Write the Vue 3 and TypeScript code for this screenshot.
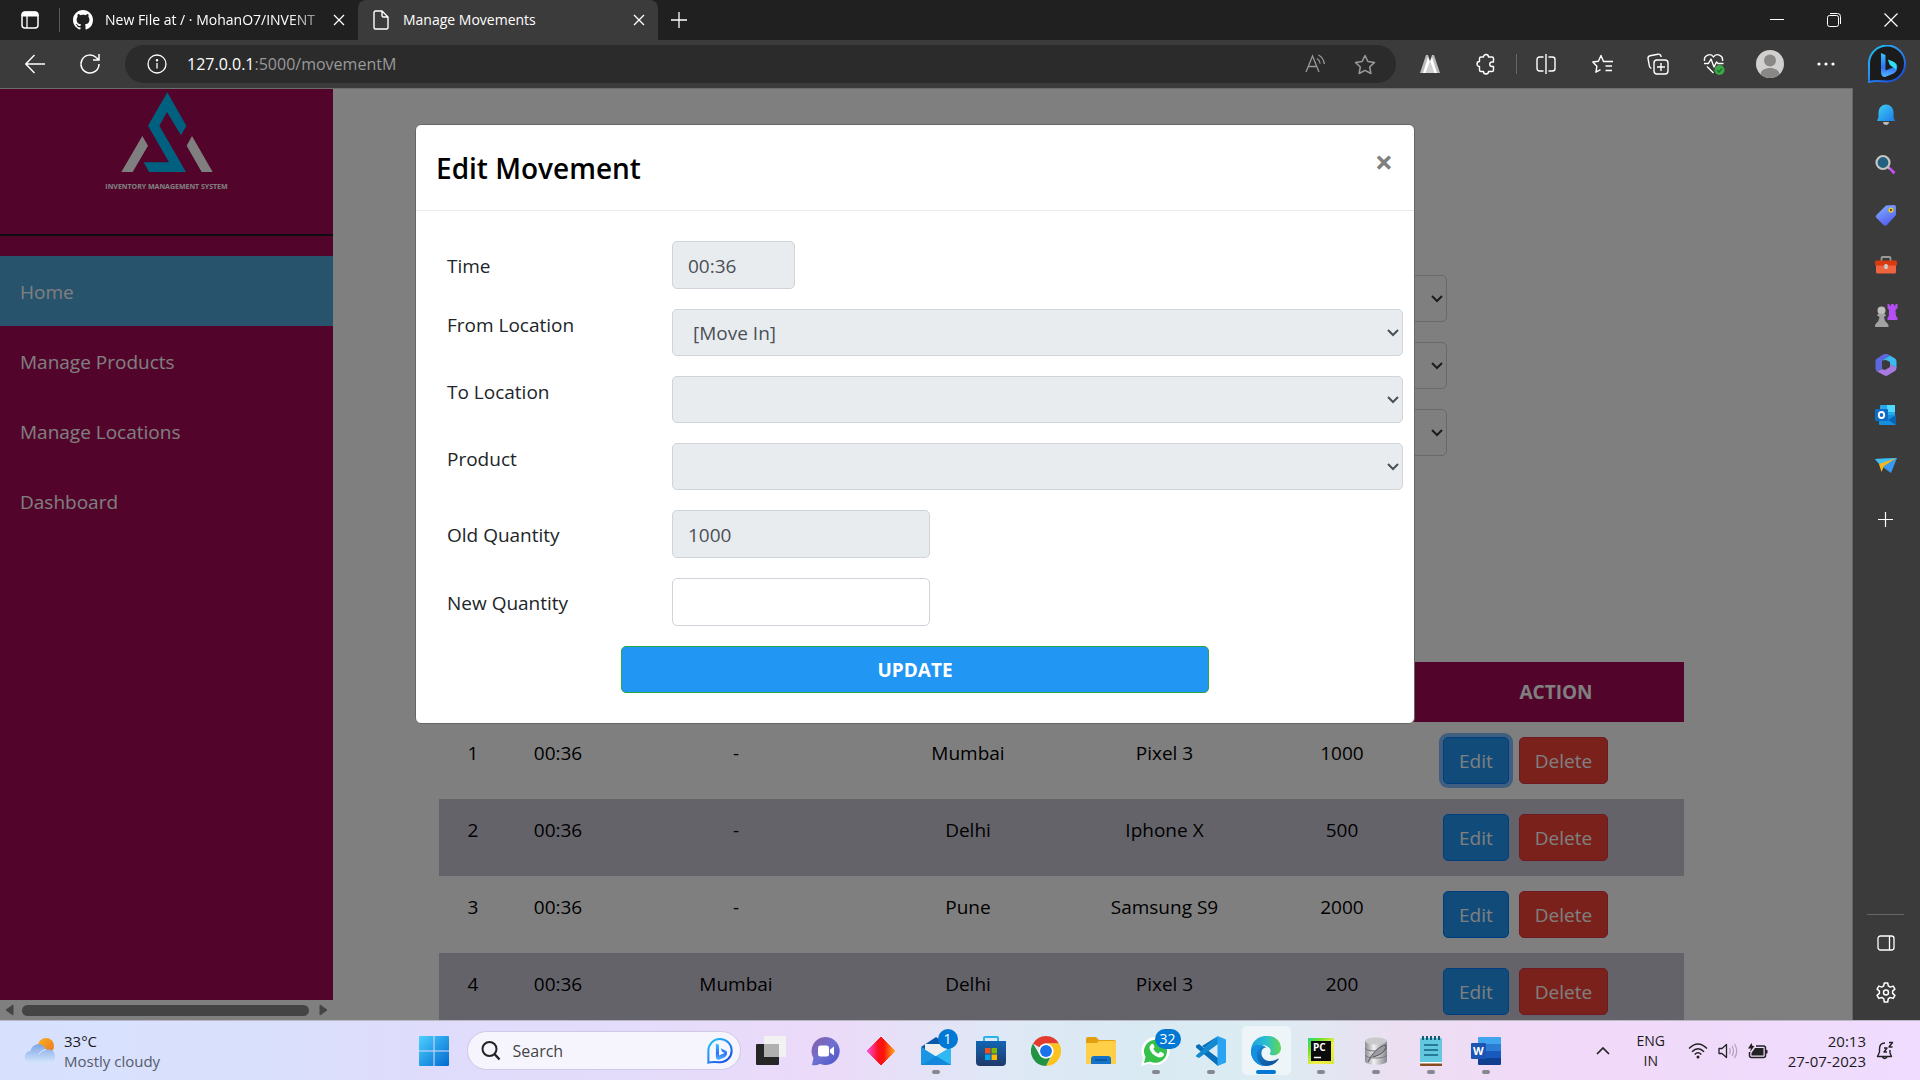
<script setup lang="ts">
import { ref } from 'vue'

interface Movement {
  id: number
  time: string
  from: string
  to: string
  product: string
  quantity: number
}

const navItems: string[] = ['Home', 'Manage Products', 'Manage Locations', 'Dashboard']

const columns: { label: string; width: number }[] = [
  { label: 'Number', width: 68 },
  { label: 'Time', width: 102 },
  { label: 'From', width: 254 },
  { label: 'To', width: 210 },
  { label: 'Product', width: 183 },
  { label: 'Quantity', width: 172 },
]

const movements: Movement[] = [
  { id: 1, time: '00:36', from: '-', to: 'Mumbai', product: 'Pixel 3', quantity: 1000 },
  { id: 2, time: '00:36', from: '-', to: 'Delhi', product: 'Iphone X', quantity: 500 },
  { id: 3, time: '00:36', from: '-', to: 'Pune', product: 'Samsung S9', quantity: 2000 },
  { id: 4, time: '00:36', from: 'Mumbai', to: 'Delhi', product: 'Pixel 3', quantity: 200 },
]

const editing = ref<number>(1)
const time = ref('00:36')
const oldQuantity = ref('1000')
const newQuantity = ref('')
</script>

<template>
  <div class="desktop">
    <header class="titlebar">
      <button class="tab-menu" aria-label="Tab actions">
        <svg width="18" height="18" viewBox="0 0 18 18" fill="none" stroke="#fff"><rect x="1" y="1" width="16" height="16" rx="3" stroke-width="1.5" /><path d="M1 4a3 3 0 0 1 3-3h10a3 3 0 0 1 3 3v1H1z" fill="#fff" /><path d="M6 5v12" stroke-width="1.3" /></svg>
      </button>
      <div class="tab">
        <svg width="20" height="20" viewBox="0 0 16 16" fill="#fff"><path d="M8 0C3.58 0 0 3.58 0 8c0 3.54 2.29 6.53 5.47 7.59.4.07.55-.17.55-.38 0-.19-.01-.82-.01-1.49-2.01.37-2.53-.49-2.69-.94-.09-.23-.48-.94-.82-1.13-.28-.15-.68-.52-.01-.53.63-.01 1.08.58 1.23.82.72 1.21 1.87.87 2.33.66.07-.52.28-.87.51-1.07-1.78-.2-3.64-.89-3.64-3.95 0-.87.31-1.59.82-2.15-.08-.2-.36-1.02.08-2.12 0 0 .67-.21 2.2.82.64-.18 1.32-.27 2-.27s1.36.09 2 .27c1.53-1.04 2.2-.82 2.2-.82.44 1.1.16 1.92.08 2.12.51.56.82 1.27.82 2.15 0 3.07-1.87 3.75-3.65 3.95.29.25.54.73.54 1.48 0 1.07-.01 1.93-.01 2.2 0 .21.15.46.55.38A8.01 8.01 0 0 0 16 8c0-4.42-3.58-8-8-8" /></svg>
        <span class="tab-title fade">New File at / · MohanO7/INVENT</span>
        <button class="tab-close" aria-label="Close tab"><svg width="12" height="12" viewBox="0 0 12 12" stroke="#fff" stroke-width="1.3"><path d="M1 1l10 10M11 1L1 11" /></svg></button>
      </div>
      <div class="tab active">
        <svg width="20" height="20" viewBox="0 0 20 20" fill="none" stroke="#fff" stroke-width="1.4" stroke-linejoin="round"><path d="M3 2.5a1.5 1.5 0 0 1 1.500-1.500H11l6 6v10.500a1.500 1.500 0 0 1-1.500 1.500h-11A1.500 1.500 0 0 1 3 17.500zM11 1v4.500a1.500 1.500 0 0 0 1.500 1.500H17" /></svg>
        <span class="tab-title">Manage Movements</span>
        <button class="tab-close" aria-label="Close tab"><svg width="12" height="12" viewBox="0 0 12 12" stroke="#fff" stroke-width="1.3"><path d="M1 1l10 10M11 1L1 11" /></svg></button>
      </div>
      <button class="new-tab" aria-label="New tab"><svg width="18" height="18" viewBox="0 0 18 18" stroke="#fff" stroke-width="1.3"><path d="M9 1v16M1 9h16" /></svg></button>
      <div class="window-controls">
        <button aria-label="Minimize"><svg width="14" height="14" viewBox="0 0 14 14" stroke="#fff"><path d="M0 6.500h14" /></svg></button>
        <button aria-label="Restore"><svg width="14" height="14" viewBox="0 0 14 14" fill="none" stroke="#fff"><rect x=".5" y="2.500" width="11" height="11" rx="2" /><path d="M3 .5h7.500a3 3 0 0 1 3 3V11" /></svg></button>
        <button aria-label="Close"><svg width="14" height="14" viewBox="0 0 14 14" stroke="#fff" stroke-width="1.2"><path d="M.5.5l13 13M13.500.5l-13 13" /></svg></button>
      </div>
    </header>

    <div class="toolbar">
      <button class="nav-btn" aria-label="Back"><svg width="20" height="20" viewBox="0 0 20 20" fill="none" stroke="#fff" stroke-width="1.4"><path d="M20 10H1M9.500 1L.8 10l8.700 9" /></svg></button>
      <button class="nav-btn" aria-label="Refresh"><svg width="22" height="22" viewBox="0 0 22 22" fill="none" stroke="#fff" stroke-width="1.5"><path d="M20 11a9 9 0 1 1-2.800-6.500L20 7M20 1v6h-6" /></svg></button>
      <div class="address">
        <svg width="20" height="20" viewBox="0 0 20 20" fill="none" stroke="#fff" stroke-width="1.300"><circle cx="10" cy="10" r="9" /><path d="M10 9v5.500" /><circle cx="10" cy="6.200" r=".6" fill="#fff" /></svg>
        <span class="url"><b>127.0.0.1</b>:5000/movementM</span>
        <button class="addr-btn" aria-label="Read aloud"><svg width="21" height="20" viewBox="0 0 21 20" fill="none" stroke="#999" stroke-width="1.300"><path d="M1 18L7.500 2 14 18M3.300 12.500h8.400M12 4.500c2 1.200 3 3 3.200 5M13.500 1c3.500 2 5.500 5.200 5.800 9" /></svg></button>
        <button class="addr-btn" aria-label="Favorite"><svg width="22" height="21" viewBox="0 0 22 21" fill="none" stroke="#999" stroke-width="1.500" stroke-linejoin="round"><path d="M11 1.500l2.900 6 6.600.9-4.800 4.600 1.200 6.500L11 16.400l-5.900 3.100 1.200-6.500L1.500 8.400l6.600-.9z" /></svg></button>
      </div>
      <div class="tools">
        <button aria-label="Extension"><svg width="20" height="18" viewBox="0 0 20 18"><path d="M0 18L6 0h2l2 6 2-6h2l6 18z" fill="#bbb" /><path d="M3 18L8 2l2 5 2-5 5 16z" fill="#fff" /><path d="M5.500 18L10 6l4.500 12z" fill="#d0d0d0" /></svg></button>
        <button aria-label="Extensions"><svg width="20" height="22" viewBox="0 0 20 22" fill="none" stroke="#fff" stroke-width="1.400" stroke-linejoin="round"><path d="M7.500 4a2.500 2.500 0 0 1 5 0H16a1.500 1.500 0 0 1 1.500 1.500V9H16a2 2 0 0 0 0 4.500h1.500V17A1.500 1.500 0 0 1 16 18.500h-3.500a2.500 2.500 0 0 1-5 0H5A1.500 1.500 0 0 1 3.500 17v-3.500a2.500 2.500 0 0 1 0-5v-3A1.500 1.500 0 0 1 5 4z" /></svg></button>
        <span class="tool-line"></span>
        <button aria-label="Split screen"><svg width="20" height="20" viewBox="0 0 20 20" fill="none" stroke="#fff" stroke-width="1.400"><path d="M7.500 3H3.500a2.500 2.500 0 0 0-2.500 2.500v9A2.500 2.500 0 0 0 3.500 17h4M12.500 3h4A2.500 2.500 0 0 1 19 5.500v9a2.500 2.500 0 0 1-2.500 2.500h-4M10 0v20" /></svg></button>
        <button aria-label="Favorites"><svg width="21" height="20" viewBox="0 0 21 20" fill="none" stroke="#fff" stroke-width="1.400" stroke-linejoin="round"><path d="M12 7.500h-.5L9 1.500l-2.600 5.700-5.600.8 4.100 4.200-1 6 4.600-2.600M11.500 7.500H21M13.500 12H20M13.500 16.500H20" /></svg></button>
        <button aria-label="Collections"><svg width="22" height="22" viewBox="0 0 22 22" fill="none" stroke="#fff" stroke-width="1.400" stroke-linejoin="round"><rect x="7" y="7" width="14" height="14" rx="3" /><path d="M14 10v8M10 14h8M4.500 15.500l-.8-.5a3 3 0 0 1-1.300-2L1 5.500A2.500 2.500 0 0 1 3 2.800l8-1.600a2.500 2.500 0 0 1 3 2V4" /></svg></button>
        <button aria-label="Browser essentials"><svg width="22" height="22" viewBox="0 0 22 22" fill="none" stroke="#fff" stroke-width="1.400" stroke-linejoin="round"><path d="M1.500 8c-1-6 6.500-8.500 9-4 2.500-4.500 10-2 9 4M1 10.500h4.500L8 6l3 8 2.500-5 1.500 1.500h5.500M4 13.500l6.500 6.500" /><circle cx="16.500" cy="17" r="5" fill="#3fa648" stroke="none" /><path d="M14 17l2 2 3-3.500" stroke="#173" /></svg></button>
        <button aria-label="Profile"><svg width="28" height="28" viewBox="0 0 28 28"><circle cx="14" cy="14" r="14" fill="#d2d0ce" /><circle cx="14" cy="10.500" r="6" fill="#8a8886" /><path d="M4.500 24.300C5 15.800 23 15.800 23.500 24.300a14 14 0 0 1-19 0z" fill="#8a8886" /></svg></button>
        <button aria-label="Settings and more"><svg width="18" height="4" viewBox="0 0 18 4" fill="#fff"><circle cx="2" cy="2" r="1.600" /><circle cx="9" cy="2" r="1.600" /><circle cx="16" cy="2" r="1.600" /></svg></button>
      </div>
      <button class="copilot" aria-label="Bing">
        <svg width="38" height="38" viewBox="0 0 38 38">
          <defs>
            <linearGradient id="bingRing" x1="0" y1="0" x2=".8" y2="1"><stop stop-color="#18c9f5" /><stop offset=".5" stop-color="#2b8cf0" /><stop offset="1" stop-color="#174ae4" /></linearGradient>
            <linearGradient id="bingB" x1="0" y1="0" x2="0" y2="1"><stop stop-color="#35c6ff" /><stop offset=".6" stop-color="#2f6ff5" /><stop offset="1" stop-color="#55b8ff" /></linearGradient>
          </defs>
          <path d="M1 37V19A18 18 0 1 1 19 36.500C12 36 6 35.500 1 37z" fill="#1b1b1b" stroke="url(#bingRing)" stroke-width="2" />
          <path d="M13 8l4.500 2v15.500L26 22l-4-2-2-5 8.500 4c2 4 0 8-3 9.500L17 32c-2.500 0-4-2-4-4.500z" fill="url(#bingB)" />
          <path d="M20 14.500l5 2c4 2 4 5 3 8l-6-4.500z" fill="#31e0f0" />
        </svg>
      </button>
    </div>

    <div class="workspace">
      <div class="page">
        <aside class="app-side">
          <div class="brand">
            <svg width="92" height="80" viewBox="361 35 276 240" aria-hidden="true">
              <path d="M500 36L557 136 541 165 499 95 476 136 556 275H445L429 246H505L442 136z" fill="#00c0ff" />
              <path d="M425 167L442 196 396 275H362zM574 167L636 275H603L558 196z" fill="#fff" />
            </svg>
            <span>INVENTORY MANAGEMENT SYSTEM</span>
          </div>
          <nav>
            <a v-for="(item, i) in navItems" :key="item" href="#" :class="{ current: i === 0 }">{{ item }}</a>
          </nav>
          <div class="hscroll" aria-hidden="true">
            <svg width="9" height="12" viewBox="0 0 9 12"><path d="M8 1v10L1 6z" fill="#888" stroke="#888" stroke-linejoin="round" /></svg>
            <i></i>
            <svg width="9" height="12" viewBox="0 0 9 12"><path d="M1 1v10l7-5z" fill="#888" stroke="#888" stroke-linejoin="round" /></svg>
          </div>
        </aside>

        <main>
          <form class="add-form">
            <div v-for="name in ['From Location', 'To Location', 'Product']" :key="name" class="select">
              <select :aria-label="name"><option></option></select>
              <svg width="12" height="8" viewBox="0 0 12 8" fill="none" stroke="#343a40" stroke-width="2"><path d="M1 1l5 5 5-5" /></svg>
            </div>
          </form>
          <table>
            <colgroup>
              <col v-for="c in columns" :key="c.label" :style="{ width: (c.width / 1245) * 100 + '%' }" />
              <col />
            </colgroup>
            <thead>
              <tr>
                <th v-for="c in columns" :key="c.label" scope="col" :aria-label="c.label"></th>
                <th scope="col">ACTION</th>
              </tr>
            </thead>
            <tbody>
              <tr v-for="m in movements" :key="m.id">
                <td>{{ m.id }}</td>
                <td>{{ m.time }}</td>
                <td>{{ m.from }}</td>
                <td>{{ m.to }}</td>
                <td>{{ m.product }}</td>
                <td>{{ m.quantity }}</td>
                <td class="actions">
                  <div>
                    <button class="edit" :class="{ focused: m.id === editing }">Edit</button>
                    <button class="delete">Delete</button>
                  </div>
                </td>
              </tr>
            </tbody>
          </table>
        </main>

        <div class="backdrop">
          <section class="modal" role="dialog" aria-labelledby="modal-title">
            <header class="modal-head">
              <h2 id="modal-title">Edit Movement</h2>
              <button aria-label="Close">×</button>
            </header>
            <form class="modal-form" @submit.prevent>
              <div class="row">
                <label for="time">Time</label>
                <input id="time" v-model="time" class="short" type="text" readonly />
              </div>
              <div class="row picker">
                <label for="from">From Location</label>
                <div class="select">
                  <select id="from" disabled><option>[Move In]</option></select>
                  <svg width="12" height="8" viewBox="0 0 12 8" fill="none" stroke="#495057" stroke-width="2"><path d="M1 1l5 5 5-5" /></svg>
                </div>
              </div>
              <div class="row picker">
                <label for="to">To Location</label>
                <div class="select">
                  <select id="to" disabled><option></option></select>
                  <svg width="12" height="8" viewBox="0 0 12 8" fill="none" stroke="#495057" stroke-width="2"><path d="M1 1l5 5 5-5" /></svg>
                </div>
              </div>
              <div class="row picker">
                <label for="product">Product</label>
                <div class="select">
                  <select id="product" disabled><option></option></select>
                  <svg width="12" height="8" viewBox="0 0 12 8" fill="none" stroke="#495057" stroke-width="2"><path d="M1 1l5 5 5-5" /></svg>
                </div>
              </div>
              <div class="row">
                <label for="old">Old Quantity</label>
                <input id="old" v-model="oldQuantity" type="text" readonly />
              </div>
              <div class="row">
                <label for="new">New Quantity</label>
                <input id="new" v-model="newQuantity" type="text" />
              </div>
              <button class="update" type="submit">UPDATE</button>
            </form>
          </section>
        </div>
      </div>

      <aside class="edge-side">
        <button aria-label="Notifications"><svg width="20" height="22" viewBox="0 0 20 22"><defs><linearGradient id="bell" x1="0" y1="0" x2="1" y2="1"><stop stop-color="#3fd0f5" /><stop offset="1" stop-color="#1b7be8" /></linearGradient></defs><path d="M7 18h6c0 4-6 4-6 0z" fill="#bbb" /><path d="M2.500 8a7.500 7.500 0 0 1 15 0v5l1.500 4H1l1.500-4z" fill="url(#bell)" /></svg></button>
        <button aria-label="Search"><svg width="22" height="22" viewBox="0 0 22 22"><path d="M12 13l2-1 6.500 6-2 2.500z" fill="#c64df5" /><path d="M11.500 12l3 3" stroke="#aaa" stroke-width="2" /><circle cx="8" cy="8.500" r="6.500" fill="#21607f" stroke="#c8c5c0" stroke-width="2.200" /></svg></button>
        <button aria-label="Shopping"><svg width="22" height="22" viewBox="0 0 22 22"><defs><linearGradient id="tag" x1="0" y1="0" x2=".5" y2="1"><stop stop-color="#84b4ff" /><stop offset="1" stop-color="#5560f0" /></linearGradient></defs><path d="M11 1.500L19 1q2 0 2 2v8l-9 10q-2 1.500-3.500 0L1.500 14q-1.500-1.500 0-3z" fill="url(#tag)" /><circle cx="16" cy="6" r="1.800" fill="#333" stroke="#f7c81c" stroke-width="1.500" /></svg></button>
        <button aria-label="Tools"><svg width="24" height="18" viewBox="0 0 24 18"><path d="M7.500 5V2q0-1 1-1h7q1 0 1 1v3" fill="none" stroke="#999" stroke-width="1.800" /><path d="M2 8h20v8q0 1.500-1.500 1.500h-17Q2 17.500 2 16z" fill="#f0633f" /><rect x="1" y="4.500" width="22" height="5" rx="1" fill="#d83b10" /><rect x="10.200" y="8" width="3.600" height="5" rx="1.500" fill="#ccc" /></svg></button>
        <button aria-label="Games"><svg width="24" height="24" viewBox="0 0 24 24"><path d="M13.500 1h2v1.500h1.700V1h2.600v1.500h1.700V1h2v4L21.500 7 22 13l1.500 2v2h-10v-2l1.300-2 .2-6-1.500-2z" fill="#b44ef5" /><circle cx="7.500" cy="7.500" r="4" fill="#bdbdbd" /><path d="M3 12.500q0-2 4.500-2t4.500 2l-2 1.500q.5 4 3 6 2 1.500 1.500 4H1q-.5-2.500 1.500-4 2.500-2 3-6z" fill="#a2a2a2" /></svg></button>
        <button aria-label="Microsoft 365"><svg width="22" height="22" viewBox="0 0 22 22"><path d="M9 0L2 4.500q-1.500 1-1.500 3v7q0 2 1.500 3l5-2.500V6.500L15 1.500 12.500 0q-1.700-.8-3.500 0z" fill="#5d68dc" /><path d="M7 6.500L15 1.500l5 3q1.500 1 1.500 3V14L15 10.500V8l-4-2z" fill="#3db9ee" /><path d="M21.500 13.500q0 2.500-1.500 3.500l-7.500 4.500q-1.500.8-3 0L2 17.500l5-2.500 3 1 5-3v-2.500z" fill="#a77ae0" /></svg></button>
        <button aria-label="Outlook"><svg width="22" height="20" viewBox="0 0 22 20"><rect x="5" width="15" height="12" rx="1" fill="#28a8ea" /><rect x="12" width="8" height="7" fill="#50d9ff" /><path d="M4 10h16l1 9q0 1-1 1H5q-1 0-1-1z" fill="#1490df" /><path d="M21 10v10l-8-5z" fill="#0a64b4" /><rect y="4" width="13" height="12" rx="1" fill="#0f6cc4" /><ellipse cx="6.500" cy="10" rx="2.700" ry="3" fill="none" stroke="#fff" stroke-width="1.800" /></svg></button>
        <button aria-label="Drop"><svg width="22" height="17" viewBox="0 0 22 17"><path d="M0 2L22 1 16 16 9 11z" fill="#3a9af0" /><path d="M0 2L22 1 5 8z" fill="#40c0f0" /><path d="M4 7L21.500 1 9 9 6.500 15z" fill="#f8b61c" /></svg></button>
        <button class="plus" aria-label="Add"><svg width="15" height="15" viewBox="0 0 15 15" stroke="#fff" stroke-width="1.200"><path d="M7.500 0v15M0 7.500h15" /></svg></button>
        <div class="edge-bottom">
          <button aria-label="Hide sidebar"><svg width="18" height="16" viewBox="0 0 18 16" fill="none" stroke="#fff" stroke-width="1.300"><rect x="1" y="1" width="16" height="14" rx="2.500" /><path d="M12.500 1v14" /></svg></button>
          <button aria-label="Settings"><svg width="22" height="22" viewBox="0 0 22 22" fill="none" stroke="#fff" stroke-width="1.500" stroke-linejoin="round"><path d="M9.300 1h3.400l.6 2.900 2 1.200 2.900-1 1.700 3-2.300 2v2.300l2.300 2-1.700 3-2.900-.9-2 1.100-.6 3.400H9.300l-.6-3.400-2-1.100-2.900.9-1.700-3 2.300-2V9.100l-2.300-2 1.700-3 2.900 1 2-1.200z" /><circle cx="11" cy="10.500" r="2.500" /></svg></button>
        </div>
      </aside>
    </div>

    <footer class="taskbar">
      <div class="weather">
        <svg width="32" height="28" viewBox="0 0 32 28">
          <defs><linearGradient id="cloud" x1="0" y1="0" x2="0" y2="1"><stop stop-color="#7fa4e8" /><stop offset="1" stop-color="#d4e6fb" /></linearGradient><linearGradient id="sun" x1="0" y1="0" x2="1" y2="1"><stop stop-color="#f5b324" /><stop offset="1" stop-color="#f0711c" /></linearGradient></defs>
          <circle cx="22" cy="9" r="8" fill="url(#sun)" />
          <path d="M7 26a6 6 0 0 1-.5-12C8 6 19 4.500 22 12.500c5-1 9 2 9 7q0 6.500-6 6.500z" fill="url(#cloud)" />
          <path d="M15 17q3-4.500 7-4.500" fill="none" stroke="#e3eefc" stroke-width="1" />
        </svg>
        <p>33°C<br /><span>Mostly cloudy</span></p>
      </div>

      <div class="dock">
        <button class="item" aria-label="Start"><svg width="30" height="30" viewBox="0 0 30 30"><defs><linearGradient id="win" x1="0" y1="0" x2="1" y2="1"><stop stop-color="#4cd0ff" /><stop offset="1" stop-color="#0069d0" /></linearGradient></defs><path d="M1 0h13.500v14.500H0V1q0-1 1-1zM15.500 0H29q1 0 1 1v13.500H15.500zM0 15.500h14.500V30H1q-1 0-1-1zM15.500 15.500H30V29q0 1-1 1H15.500z" fill="url(#win)" /></svg></button>
        <div class="search">
          <svg width="20" height="20" viewBox="0 0 20 20" fill="none" stroke="#222" stroke-width="2"><circle cx="8.500" cy="8" r="7" /><path d="M13.500 13l5 5.500" stroke-width="2.400" /></svg>
          <input type="text" placeholder="Search" aria-label="Search" />
          <svg width="26" height="26" viewBox="0 0 38 38"><path d="M2 36V19A17 17 0 1 1 19 35.500C12 35 6 34.500 2 36z" fill="#f6f8ff" stroke="url(#bingRing)" stroke-width="3" /><path d="M13 8l4.500 2v15.500L26 22l-4-2-2-5 8.500 4c2 4 0 8-3 9.500L17 32c-2.500 0-4-2-4-4.500z" fill="url(#bingB)" /></svg>
        </div>
        <button class="item" aria-label="Task view"><svg width="30" height="32" viewBox="0 0 30 32"><path d="M0 10q0-1 1-1h22v20q0 1-1 1H1q-1 0-1-1z" fill="#262626" /><path d="M8 2q0-1 1-1h20q1 0 1 1v19q0 1-1 1H9q-1 0-1-1z" fill="#f2f2f2" /><path d="M8 9h15v13H9q-1 0-1-1z" fill="#b0b0b0" /></svg></button>
        <button class="item" aria-label="Chat"><svg width="30" height="30" viewBox="0 0 30 30"><defs><linearGradient id="chat" x1="0" y1="0" x2="1" y2="1"><stop stop-color="#8a5fa8" /><stop offset=".5" stop-color="#6d6fd0" /><stop offset="1" stop-color="#4a52c8" /></linearGradient></defs><path d="M15 1a14 14 0 1 1-6 26.800Q5 30 1 29l1.500-7A14 14 0 0 1 15 1z" fill="url(#chat)" /><rect x="7" y="9.500" width="11" height="11" rx="2.500" fill="#fff" /><path d="M19 13.500l4-3v9l-4-3z" fill="#fff" /></svg></button>
        <button class="item" aria-label="AnyDesk"><svg width="30" height="30" viewBox="0 0 30 30"><defs><linearGradient id="dia"><stop stop-color="#ff4fe0" /><stop offset=".4" stop-color="#fa1020" /><stop offset=".6" stop-color="#fa1508" /><stop offset="1" stop-color="#ffae20" /></linearGradient></defs><path d="M15 1l14 14-14 14L1 15z" fill="url(#dia)" stroke="url(#dia)" stroke-linejoin="round" /></svg></button>
        <button class="item open" aria-label="Mail"><svg width="30" height="28" viewBox="0 0 30 28"><path d="M15 0l15 10-15 10L0 10z" fill="#0a5aa8" /><path d="M4 7h22v8l-11 7L4 14z" fill="#eee" /><path d="M0 10l15 9.500L30 10v18H0z" fill="#1a96e4" /><path d="M0 28L30 10v18z" fill="#2fb8f2" /><path d="M15 19l15 9H0z" fill="#1287dc" /></svg><em>1</em></button>
        <button class="item" aria-label="Store"><svg width="30" height="30" viewBox="0 0 30 30"><defs><linearGradient id="store" x1="0" y1="0" x2="0" y2="1"><stop stop-color="#1266b4" /><stop offset="1" stop-color="#1f3868" /></linearGradient></defs><path d="M8 6V2q0-1 1-1h12q1 0 1 1v4" fill="none" stroke="#28b4e8" stroke-width="2" /><path d="M0 5h30v21q0 4-4 4H4q-4 0-4-4z" fill="url(#store)" /><path d="M9 12h5.500v5.500H9z" fill="#f25022" /><path d="M15.500 12H21v5.500h-5.500z" fill="#7fba00" /><path d="M9 18.500h5.500V24H9z" fill="#00a4ef" /><path d="M15.500 18.500H21V24h-5.500z" fill="#ffb900" /></svg></button>
        <button class="item" aria-label="Chrome"><svg width="30" height="30" viewBox="0 0 48 48"><path d="M24 0a24 24 0 0 1 20.800 12H24a12 12 0 0 0-10.400 6L3.200 12A24 24 0 0 1 24 0z" fill="#e33b2e" /><path d="M44.800 12A24 24 0 0 1 24 48l10.400-18A12 12 0 0 0 34 17.400L24 12z" fill="#fcc31e" /><path d="M3.200 12l10.400 18A12 12 0 0 0 24 36l7-2-7 14A24 24 0 0 1 3.200 12z" fill="#229342" /><circle cx="24" cy="24" r="12" fill="#fff" /><circle cx="24" cy="24" r="9.500" fill="#1a73e8" /></svg></button>
        <button class="item" aria-label="File Explorer"><svg width="30" height="28" viewBox="0 0 30 28"><path d="M0 2q0-2 2-2h8l3 3h15q2 0 2 2v6H0z" fill="#e0a010" /><path d="M0 6h11l2-2h15q2 0 2 2v20q0 1-1 1H1q-1 0-1-1z" fill="#ffcf48" /><path d="M5 27v-5q0-3 3-3h14q3 0 3 3v5z" fill="#1273c8" /><path d="M9 23h12" stroke="#0a4f98" stroke-width="1.500" /></svg></button>
        <button class="item open" aria-label="WhatsApp"><svg width="30" height="30" viewBox="0 0 30 30"><path d="M0 30l2.300-8A14 14 0 1 1 8 27.500z" fill="#fff" /><path d="M3 27l1.500-6A11.500 11.500 0 1 1 9 25.400z" fill="#35c24a" /><path d="M10 8.500q1.500-1.500 2.500 0l1 2.500q0 1-1.200 2 1.700 3.200 5 4.700l1.500-1.600q.8-.5 1.500 0l2.200 1.200q1 .7 0 2.400-1.700 2.300-5 1.600-7.500-2.500-9-9-.2-2.300 1.500-3.800z" fill="#fff" /></svg><em class="wide">32</em></button>
        <button class="item open" aria-label="Visual Studio Code"><svg width="30" height="30" viewBox="0 0 30 30"><path d="M22 0L8.500 12.500 3 8 0 9.500v2L22 30V22L6 10z" fill="#0a6fba" /><path d="M0 19.500L22 0v8L3 22 0 20.500z" fill="#1389d2" /><path d="M21.500 0L30 3.500v23L21.500 30z" fill="#2aa4f2" /></svg></button>
        <button class="item open here" aria-label="Microsoft Edge"><svg width="30" height="30" viewBox="0 0 30 30"><defs><linearGradient id="edgeTop"><stop stop-color="#1f9fe0" /><stop offset=".5" stop-color="#2bbfd0" /><stop offset="1" stop-color="#62d850" /></linearGradient><linearGradient id="edgeLow" x1="0" y1="0" x2="1" y2="1"><stop stop-color="#1a90dc" /><stop offset="1" stop-color="#0c4a94" /></linearGradient></defs><path d="M0 14C1-4 29-5 30 12c0 7-8 9-11.500 6 3-4 0-8-6.500-9C6 8.500 1.500 11 0 14z" fill="url(#edgeTop)" /><path d="M0 14c2-5 10-7 15-2.500C8 12 9 24 18 25c4 .5 7-1 9-2.500.8 0 .8.500.5 1C24 28 20 30 15 30 6 30-.5 23 0 14z" fill="url(#edgeLow)" /><path d="M15 11.500C9 9 5 15 6 21c1 5 5 8.500 9 9C6 30-.5 23 0 14c2-5 10-7 15-2.500z" fill="#1490e0" /></svg></button>
        <button class="item open" aria-label="PyCharm"><svg width="26" height="26" viewBox="0 0 26 26"><defs><linearGradient id="pc" x1="0" y1="0" x2="1" y2="1"><stop stop-color="#21d789" /><stop offset=".25" stop-color="#6fe02a" /><stop offset=".6" stop-color="#f5f04a" /><stop offset="1" stop-color="#d8e83a" /></linearGradient></defs><rect width="26" height="26" fill="url(#pc)" /><rect x="3" y="3" width="20" height="20" fill="#0b0b0b" /><text x="5" y="13" font-size="10" font-weight="700" fill="#fff">PC</text><path d="M6 19.500h7" stroke="#fff" stroke-width="1.500" /></svg></button>
        <button class="item open" aria-label="Database"><svg width="22" height="28" viewBox="0 0 22 28"><defs><linearGradient id="db"><stop stop-color="#8b8b90" /><stop offset=".4" stop-color="#f0f0f2" /><stop offset="1" stop-color="#85858c" /></linearGradient></defs><path d="M0 4v20c0 5 22 5 22 0V4z" fill="url(#db)" /><ellipse cx="11" cy="4" rx="11" ry="3.500" fill="#c9c9ce" /><path d="M0 11c1 4 21 4 22 0M0 18c1 4 21 4 22 0" fill="none" stroke="#77777e" /><path d="M3 25C7 16 14 9 21 8c0 6-5 10-13 12" fill="#9a9aa0" stroke="#55555c" /></svg></button>
        <button class="item open" aria-label="Notepad"><svg width="22" height="30" viewBox="0 0 22 30"><rect y="2" width="22" height="26" rx="1" fill="#62c8e0" /><path d="M0 27h22v3H1q-1 0-1-1z" fill="#8a4a20" /><path d="M0 26h22v1.500H0z" fill="#fff" /><path d="M4 9h14M4 14h14M4 19h14" stroke="#14607c" stroke-width="1.700" /><path d="M3 0v4M7 0v4M11 0v4M15 0v4M19 0v4" stroke="#185a70" stroke-width="2" /></svg></button>
        <button class="item open" aria-label="Word"><svg width="30" height="28" viewBox="0 0 30 28"><path d="M8 0h21q1 0 1 1v6H7V1q0-1 1-1z" fill="#41a5ee" /><path d="M7 7h23v7H7z" fill="#2b7cd3" /><path d="M7 14h23v7H7z" fill="#185abd" /><path d="M7 21h23v6q0 1-1 1H8q-1 0-1-1z" fill="#103f91" /><rect y="6" width="15" height="16" rx="1" fill="#1c54b4" /><text x="2" y="18" font-size="11" font-weight="700" fill="#fff">W</text></svg></button>
      </div>

      <div class="tray">
        <button class="chev" aria-label="Show hidden icons"><svg width="14" height="8" viewBox="0 0 14 8" fill="none" stroke="#222" stroke-width="1.700"><path d="M1 7l6-6 6 6" /></svg></button>
        <p class="lang">ENG<br />IN</p>
        <div class="status">
          <svg width="20" height="16" viewBox="0 0 20 16" fill="none" stroke="#222" stroke-width="1.500"><path d="M1 5.500q9-9 18 0M4 8.700q6-6 12 0M6.700 11.500q3.300-3.300 6.600 0" /><circle cx="10" cy="14" r="1.500" fill="#222" stroke="none" /></svg>
          <svg width="20" height="16" viewBox="0 0 20 16" fill="none" stroke="#222" stroke-width="1.300" stroke-linejoin="round"><path d="M1 5.500h3L8.500 1.500v13L4 10.500H1z" /><path d="M11.500 5q1.500 3 0 6M14 3q3 5 0 10M16.500 1q4.500 7 0 14" stroke="#b3a3bd" /></svg>
          <svg width="20" height="16" viewBox="0 0 20 16"><path d="M8 3h7.500q2 0 2 2v7.500q0 2-2 2h-12q-2 0-2-2V9" fill="none" stroke="#222" stroke-width="1.500" /><path d="M7 5h8.500v7.500h-12V10z" fill="#222" /><path d="M18 7h1.500v3.500H18z" fill="#222" /><path d="M3.500 0L0 5.500h3L2 9l4.500-6H4.500z" fill="#222" /></svg>
        </div>
        <p class="clock">20:13<br />27-07-2023</p>
        <svg width="18" height="19" viewBox="0 0 18 19" fill="none" stroke="#222" stroke-width="1.400" stroke-linejoin="round"><path d="M9 2Q3.500 2 3.500 8v3L1.500 15.500h14L14 12V9M6.500 16q2 3 4.500 0M8 7h3L8 11h3M13 1.500h3.500L13 6h3.500" /></svg>
      </div>
    </footer>
  </div>
</template>

<style>
body {
  margin: 0;
}
</style>

<style scoped>
.desktop {
  display: flex;
  flex-direction: column;
  height: 100vh;
  overflow: hidden;
  background: #3b3b3b;
  font-family: 'Open Sans', 'Noto Sans', sans-serif;
  font-size: 19px;
  line-height: 30px;
  color: #212529;
}
* {
  box-sizing: border-box;
}
button,
input,
select {
  font: inherit;
  margin: 0;
}
button {
  padding: 0;
  border: 0;
  background: none;
  color: inherit;
}
svg {
  display: block;
  flex: none;
}
p,
h2 {
  margin: 0;
}

/* browser chrome */
.titlebar {
  display: flex;
  height: 40px;
  flex: none;
  background: #202020;
  color: #fff;
}
.tab-menu {
  width: 60px;
  padding-left: 21px;
  background: linear-gradient(#5a5a5a, #5a5a5a) right center / 1px 24px no-repeat;
}
.tab {
  display: flex;
  align-items: center;
  width: 298px;
  padding: 0 13px;
  gap: 12px;
  font-size: 14px;
}
.tab.active {
  width: 300px;
  background: #3b3b3b;
  border-radius: 8px 8px 0 0;
}
.tab-title {
  flex: 1;
  white-space: nowrap;
}
.fade {
  mask-image: linear-gradient(90deg, #000 85%, #0006);
}
.new-tab {
  padding: 0 12px;
}
.window-controls {
  display: flex;
  margin-left: auto;
  padding-right: 1px;
}
.window-controls button {
  width: 57px;
  display: grid;
  place-items: center;
}
.toolbar {
  display: flex;
  align-items: center;
  height: 48px;
  flex: none;
  color: #fff;
}
.nav-btn {
  display: grid;
  place-items: center;
  width: 55px;
}
.nav-btn:first-child {
  margin-left: 7px;
}
.address {
  display: flex;
  flex: 1;
  align-items: center;
  height: 38px;
  margin-left: 8px;
  padding: 0 20px 0 22px;
  border-radius: 19px;
  background: #2b2b2b;
}
.url {
  flex: 1;
  padding-left: 20px;
  font-size: 16px;
  color: #999;
}
.url b {
  font-weight: 400;
  color: #fff;
}
.addr-btn + .addr-btn {
  margin-left: 28px;
}
.tools {
  display: flex;
  align-items: center;
  padding-left: 6px;
}
.tools button {
  display: grid;
  place-items: center;
  width: 56px;
}
.tool-line {
  width: 1px;
  height: 20px;
  margin: 0 1px 0 2px;
  background: #666;
}
.copilot {
  width: 66px;
  padding-left: 14px;
}

/* web page */
.workspace {
  display: flex;
  flex: 1;
  min-height: 0;
}
.page {
  position: relative;
  display: flex;
  flex: 1;
  min-width: 0;
  overflow: hidden;
  background: #fff;
  border-top: 1px solid #6c6c6c;
}
.app-side {
  display: flex;
  flex-direction: column;
  width: 333px;
  flex: none;
  background: #a40856;
  color: #fff;
}
.brand {
  display: flex;
  flex-direction: column;
  align-items: center;
  height: 147px;
  padding-top: 3px;
  border-bottom: 2px solid #1a1a24;
  font-size: 7px;
  font-weight: 700;
  line-height: 12px;
}
.brand span {
  margin-top: 9px;
}
nav {
  display: flex;
  flex: 1;
  flex-direction: column;
  padding-top: 20px;
}
nav a {
  height: 70px;
  padding: 21px 20px 19px;
  color: #fff;
  text-decoration: none;
}
nav .current {
  background: #50a6d8;
}
.hscroll {
  display: flex;
  align-items: center;
  gap: 8px;
  height: 20px;
  padding: 0 5px;
  background: #fff;
}
.hscroll i {
  flex: 1;
  height: 11px;
  margin-right: 2px;
  border-radius: 6px;
  background: #888;
}
main {
  flex: 1;
  padding: 0 168px 0 106px;
}
.add-form {
  display: flex;
  flex-direction: column;
  align-items: flex-end;
  gap: 20px;
  height: 573px;
  padding: 186px 237px 0 0;
}
.select {
  position: relative;
  width: 100%;
  max-width: 731px;
}
.select svg {
  position: absolute;
  right: 4px;
  top: 20px;
}
select {
  display: block;
  width: 100%;
  height: 47px;
  padding: 1px 20px 0;
  appearance: none;
  border: 1px solid #ced4da;
  border-radius: 5px;
  background: #fff;
  color: #495057;
}
table {
  width: 100%;
  table-layout: fixed;
  border-collapse: collapse;
  color: #000;
}
th {
  height: 60px;
  padding: 0;
  background: #a40856;
  color: #fff;
  font-weight: 700;
}
td {
  height: 77px;
  padding: 16px 0 0;
  text-align: center;
  vertical-align: top;
}
tbody tr:nth-child(even) {
  background: #cac6d4;
}
td.actions {
  padding-top: 15px;
}
.actions div {
  display: flex;
  gap: 10px;
  padding-left: 15px;
}
.actions button {
  height: 47px;
  padding: 0 15px;
  border: 1px solid #007bff;
  border-radius: 5px;
  background: #2196f3;
  color: #fff;
}
.actions .delete {
  border-color: #dc3545;
  background: #f44336;
}
.actions .focused {
  box-shadow: 0 0 0 4px #80bdff;
}
.backdrop {
  position: absolute;
  inset: 0;
  display: flex;
  justify-content: center;
  align-items: flex-start;
  padding: 35px 22px 0 0;
  background: rgba(0, 0, 0, 0.5);
}
.modal {
  width: 100%;
  max-width: 1000px;
  border: 1px solid #666;
  border-radius: 6px;
  background: #fff;
}
.modal-head {
  display: flex;
  justify-content: space-between;
  height: 86px;
  padding: 20px;
  border-bottom: 1px solid #e9ecef;
}
h2 {
  font-size: 28px;
  font-weight: 600;
  line-height: 46px;
  color: #000;
}
.modal-head button {
  width: 20px;
  height: 34px;
  font-size: 32px;
  font-weight: 700;
  color: #808080;
}
.modal-form {
  display: flex;
  flex-direction: column;
  gap: 20px;
  padding: 30px 10px 30px 31px;
}
.row {
  display: flex;
}
label {
  width: 225px;
  flex: none;
  padding-top: 10px;
}
.picker label {
  padding-top: 1px;
}
input {
  width: 258px;
  height: 48px;
  padding: 1px 15px 0;
  border: 1px solid #ced4da;
  border-radius: 5px;
  outline: 0;
  background: #fff;
  color: #495057;
}
input.short {
  width: 123px;
}
input:read-only,
select:disabled {
  background: #e9ecef;
  color: #495057;
  opacity: 1;
}
.update {
  align-self: center;
  width: 588px;
  height: 47px;
  margin-right: 21px;
  border: 1px solid #28a745;
  border-radius: 5px;
  background: #2196f3;
  color: #fff;
  font-weight: 700;
}

/* browser side panel */
.edge-side {
  display: flex;
  flex-direction: column;
  width: 68px;
  flex: none;
  padding: 2px 2px 0 0;
  border-left: 1px solid #666;
}
.edge-side button {
  display: grid;
  place-items: center;
  width: 100%;
  height: 50px;
}
.edge-side .plus {
  margin-top: 4px;
}
.edge-bottom {
  margin: auto 14px 2px;
  padding-top: 3px;
  border-top: 1px solid #666;
}

/* taskbar */
.taskbar {
  display: grid;
  grid-template-columns: 1fr auto 1fr;
  align-items: center;
  height: 60px;
  flex: none;
  border-top: 1px solid #b8b8c4;
  background: linear-gradient(90deg, #d7e1fd 0%, #d9e0fc 14%, #dfdcfb 22%, #e4dcfa 34%, #ecdaf9 43%, #dfe8f6 52%, #d9eaf3 60%, #dcecf2 66%, #ecdff2 73%, #f1d9f8 80%, #efdcfe 100%);
  font-size: 14px;
  line-height: 20px;
  color: #1b1b1b;
}
.weather {
  display: flex;
  align-items: center;
  gap: 8px;
  padding-left: 24px;
  font-size: 15px;
}
.weather span {
  color: #555b6b;
}
.dock {
  display: flex;
  align-items: center;
}
.item {
  position: relative;
  display: grid;
  place-items: center;
  width: 55px;
  height: 59px;
}
.item.open::after {
  content: '';
  position: absolute;
  bottom: 6px;
  width: 8px;
  height: 4px;
  border-radius: 2px;
  background: #868891;
}
.item.here {
  width: 49px;
  height: 49px;
  margin: 0 3px;
  border-radius: 5px;
  background: #eef5f8;
}
.item.here::after {
  bottom: 1px;
  width: 20px;
  background: #0078d4;
}
.item em {
  position: absolute;
  top: 8px;
  left: 29px;
  width: 20px;
  height: 20px;
  border-radius: 10px;
  background: #0078d4;
  color: #fff;
  font-style: normal;
}
.item em.wide {
  left: 26px;
  width: 26px;
}
.search {
  display: flex;
  align-items: center;
  width: 274px;
  height: 39px;
  margin: 0 3px 0 5px;
  padding: 0 7px 0 13px;
  border: 1px solid #cdc9e6;
  border-radius: 20px;
  background: #f6f5fe;
}
.search input {
  flex: 1;
  width: 0;
  height: 30px;
  padding: 0 12px;
  border: 0;
  background: none;
  font-size: 16px;
}
.search input::placeholder {
  color: #444;
  opacity: 1;
}
.tray {
  display: flex;
  justify-content: flex-end;
  align-items: center;
  padding-right: 26px;
}
.lang {
  width: 30px;
  margin: 0 22px 0 26px;
  text-align: center;
}
.status {
  display: flex;
  gap: 10px;
  margin-right: 20px;
}
.clock {
  margin-right: 10px;
  text-align: right;
  font-size: 15px;
}
</style>
